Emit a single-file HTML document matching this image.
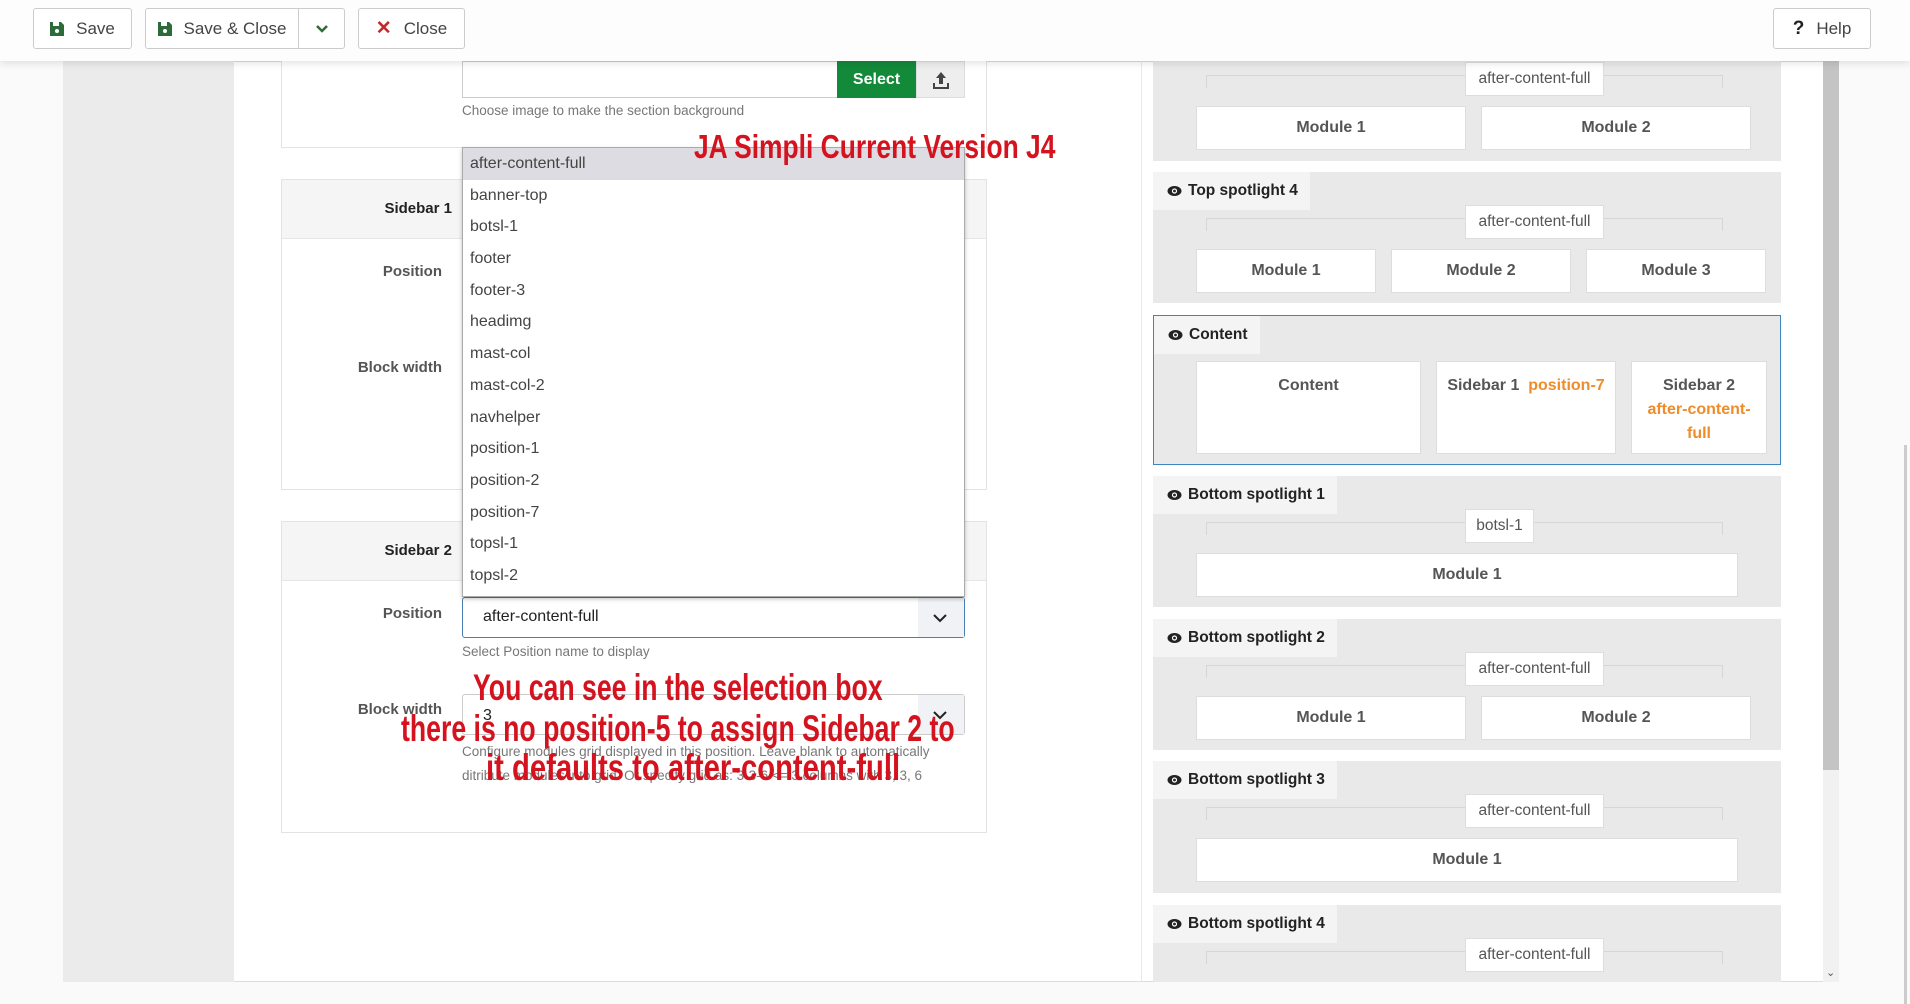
<!DOCTYPE html>
<html><head><meta charset="utf-8">
<style>
*{box-sizing:border-box;margin:0;padding:0}
body{width:1910px;height:1004px;overflow:hidden;background:#fafafa;font-family:"Liberation Sans",sans-serif;position:relative;color:#333}
.a{position:absolute}
.tb{left:0;top:0;width:1910px;height:61px;background:#fdfdfd;box-shadow:0 2px 8px rgba(0,0,0,.12);z-index:10}
.btn{position:absolute;top:8px;height:41px;border:1px solid #ccc;border-radius:3px;background:#fff;font-size:17px;color:#444;display:flex;align-items:center;justify-content:center;gap:12px}
.lbl{font-size:15px;font-weight:bold;color:#555;text-align:right;width:160px}
.card{border:1px solid #e3e3e3;background:#fff}
.hdr{background:#f5f5f5;border-bottom:1px solid #e6e6e6}
.inp{border:1px solid #ccc;border-radius:3px;background:#fff}
.help{font-size:13.5px;color:#777}
.red{color:#d4131f;font-family:"Liberation Sans",sans-serif;font-weight:bold;white-space:nowrap;z-index:6;transform-origin:0 50%}
.dd{left:462px;top:147px;width:503px;height:450px;background:#fff;border:1px solid #aaa;box-shadow:0 2px 4px rgba(0,0,0,.25);z-index:5}
.dd div{height:31.7px;line-height:31.7px;padding-left:7px;font-size:16px;color:#444}
.sec{position:absolute;left:1153px;width:628px;background:#e9e9e9}
.tab{position:absolute;left:0;top:0;height:38px;background:#f4f4f4;font-size:15.5px;font-weight:bold;color:#222;display:flex;align-items:center;padding-left:14px;gap:6px}
.tag{position:absolute;top:33px;height:34px;background:#fff;border:1px solid #ddd;font-size:15.5px;color:#555;line-height:32px;text-align:center}
.ln{position:absolute;top:46px;left:53px;width:517px;height:13px;border:1px solid #d6d6d6;border-bottom:none}
.mod{position:absolute;top:77px;height:44px;background:#fff;border:1px solid #ddd;font-size:16px;font-weight:bold;color:#555;text-align:center;line-height:42px}
</style></head><body>
<div class="a" style="left:63px;top:61px;width:1776px;height:921px;background:#fff;border:1px solid #ddd"></div>
<div class="a" style="left:63px;top:61px;width:171px;height:921px;background:#ebebeb"></div>
<div class="a" style="left:1141px;top:61px;width:1px;height:921px;background:#e8e8e8"></div>
<div class="a" style="left:1823px;top:61px;width:16px;height:921px;background:#f1f1f1"></div>
<div class="a" style="left:1823px;top:61px;width:16px;height:709px;background:#c4c4c4"></div>
<div class="a" style="left:1826px;top:966px;font-size:11px;color:#555">&#8964;</div>
<div class="a" style="left:1904px;top:445px;width:3px;height:559px;background:#ccc"></div>

<div class="a tb">
<div class="btn" style="left:33px;width:99px"><svg width="14" height="15" viewBox="0 0 14 15"><path d="M0 1h11l3 3v11H0z" fill="#2e6b3a"/><rect x="3" y="1" width="6" height="4" fill="#fff"/><circle cx="7" cy="10" r="2" fill="#fff"/></svg>Save</div>
<div class="btn" style="left:145px;width:154px;border-radius:3px 0 0 3px"><svg width="14" height="15" viewBox="0 0 14 15"><path d="M0 1h11l3 3v11H0z" fill="#2e6b3a"/><rect x="3" y="1" width="6" height="4" fill="#fff"/><circle cx="7" cy="10" r="2" fill="#fff"/></svg>Save &amp; Close</div>
<div class="btn" style="left:298px;width:47px;border-radius:0 3px 3px 0"><svg width="14" height="10" viewBox="0 0 14 10"><path d="M2 2l5 5 5-5" stroke="#2e6b3a" stroke-width="2.5" fill="none"/></svg></div>
<div class="btn" style="left:358px;width:107px"><span style="color:#c52827;font-weight:bold;font-size:19px">✕</span>Close</div>
<div class="btn" style="left:1773px;width:98px"><span style="font-weight:bold;font-size:19px;color:#222">?</span>Help</div>
</div>

<!-- top card -->
<div class="a card" style="left:281px;top:40px;width:706px;height:108px;border-top:none"></div>
<div class="a inp" style="left:462px;top:61px;width:380px;height:37px;border-radius:0"></div>
<div class="a" style="left:837px;top:61px;width:79px;height:37px;background:#138a3a;color:#fff;font-weight:bold;font-size:16px;text-align:center;line-height:37px">Select</div>
<div class="a" style="left:916px;top:61px;width:49px;height:37px;background:#eee;border:1px solid #ddd"><svg class="a" style="left:16px;top:9px" width="16" height="18" viewBox="0 0 16 18"><path d="M8 1L3 7h3v6h4V7h3z" fill="#444"/><path d="M1 12v5h14v-5" stroke="#444" stroke-width="2" fill="none"/></svg></div>
<div class="a help" style="left:462px;top:103px">Choose image to make the section background</div>

<!-- sidebar 1 -->
<div class="a card" style="left:281px;top:179px;width:706px;height:311px"></div>
<div class="a hdr" style="left:282px;top:180px;width:704px;height:59px"></div>
<div class="a lbl" style="left:292px;top:200px;color:#222">Sidebar 1</div>
<div class="a lbl" style="left:282px;top:263px">Position</div>
<div class="a lbl" style="left:282px;top:359px">Block width</div>

<!-- sidebar 2 -->
<div class="a card" style="left:281px;top:521px;width:706px;height:312px"></div>
<div class="a hdr" style="left:282px;top:522px;width:704px;height:59px"></div>
<div class="a lbl" style="left:292px;top:542px;color:#222">Sidebar 2</div>
<div class="a lbl" style="left:282px;top:605px">Position</div>
<div class="a inp" style="left:462px;top:597px;width:503px;height:41px;border-color:#4a7fb5;border-radius:3px"><span class="a" style="left:20px;top:10px;font-size:16px;color:#222">after-content-full</span><div class="a" style="right:0;top:0;width:46px;height:39px;background:#f0f2f6"></div><svg class="a" style="right:16px;top:14px" width="16" height="12" viewBox="0 0 16 12"><path d="M2 3l6 6 6-6" stroke="#222" stroke-width="2" fill="none"/></svg></div>
<div class="a help" style="left:462px;top:644px">Select Position name to display</div>
<div class="a lbl" style="left:282px;top:701px">Block width</div>
<div class="a inp" style="left:462px;top:694px;width:503px;height:41px"><span class="a" style="left:20px;top:12px;font-size:16px;color:#222">3</span><div class="a" style="right:0;top:0;width:46px;height:39px;background:#f0f2f6"></div><svg class="a" style="right:16px;top:14px" width="16" height="12" viewBox="0 0 16 12"><path d="M2 3l6 6 6-6" stroke="#222" stroke-width="2" fill="none"/></svg></div>
<div class="a help" style="left:462px;top:740px;width:510px;line-height:23.5px">Configure modules grid displayed in this position. Leave blank to automatically ditribute modules into grid. Or specify grid as: 3-3-6 &lt;= 3 columns with 3, 3, 6</div>

<!-- dropdown -->
<div class="a dd">
<div style="background:#dcdce2">after-content-full</div><div>banner-top</div><div>botsl-1</div><div>footer</div><div>footer-3</div><div>headimg</div><div>mast-col</div><div>mast-col-2</div><div>navhelper</div><div>position-1</div><div>position-2</div><div>position-7</div><div>topsl-1</div><div>topsl-2</div>
</div>

<div class="a red" style="left:694px;top:128px;font-size:33px;transform:scaleX(.8)">JA Simpli Current Version J4</div>
<div class="a red" style="left:473px;top:667px;font-size:37px;transform:scaleX(.72)">You can see in the selection box</div>
<div class="a red" style="left:401px;top:708px;font-size:37px;transform:scaleX(.72)">there is no position-5 to assign Sidebar 2 to</div>
<div class="a red" style="left:486px;top:747px;font-size:37px;transform:scaleX(.79)">it defaults to after-content-full</div>

<!-- right -->
<div class="sec" style="top:29px;height:132px"><div class="ln"></div><div class="tag" style="left:312px;width:139px">after-content-full</div><div class="mod" style="left:43px;width:270px">Module 1</div><div class="mod" style="left:328px;width:270px">Module 2</div></div>

<div class="sec" style="top:172px;height:131px"><div class="tab" style="width:157px"><svg width="15" height="12" viewBox="0 0 15 12"><ellipse cx="7.5" cy="6" rx="7" ry="5" fill="#222"/><circle cx="7.5" cy="6" r="2.6" fill="#fff"/><circle cx="7.5" cy="6" r="1.4" fill="#222"/></svg>Top spotlight 4</div><div class="ln"></div><div class="tag" style="left:312px;width:139px">after-content-full</div><div class="mod" style="left:43px;width:180px">Module 1</div><div class="mod" style="left:238px;width:180px">Module 2</div><div class="mod" style="left:433px;width:180px">Module 3</div></div>

<div class="sec" style="top:315px;height:150px;border:1.5px solid #3d86c0"><div class="tab" style="width:106px;left:0;top:0"><svg width="15" height="12" viewBox="0 0 15 12"><ellipse cx="7.5" cy="6" rx="7" ry="5" fill="#222"/><circle cx="7.5" cy="6" r="2.6" fill="#fff"/><circle cx="7.5" cy="6" r="1.4" fill="#222"/></svg>Content</div>
<div class="mod" style="left:42px;top:45px;width:225px;height:93px;line-height:1.5;padding-top:12px">Content</div>
<div class="mod" style="left:282px;top:45px;width:180px;height:93px;line-height:1.5;padding-top:12px">Sidebar 1&nbsp; <span style="color:#ef8c2a">position-7</span></div>
<div class="mod" style="left:477px;top:45px;width:136px;height:93px;line-height:24px;padding-top:12px">Sidebar 2<br><span style="color:#ef8c2a">after-content-<br>full</span></div></div>

<div class="sec" style="top:476px;height:131px"><div class="tab" style="width:184px"><svg width="15" height="12" viewBox="0 0 15 12"><ellipse cx="7.5" cy="6" rx="7" ry="5" fill="#222"/><circle cx="7.5" cy="6" r="2.6" fill="#fff"/><circle cx="7.5" cy="6" r="1.4" fill="#222"/></svg>Bottom spotlight 1</div><div class="ln"></div><div class="tag" style="left:312px;width:69px">botsl-1</div><div class="mod" style="left:43px;width:542px">Module 1</div></div>

<div class="sec" style="top:619px;height:131px"><div class="tab" style="width:184px"><svg width="15" height="12" viewBox="0 0 15 12"><ellipse cx="7.5" cy="6" rx="7" ry="5" fill="#222"/><circle cx="7.5" cy="6" r="2.6" fill="#fff"/><circle cx="7.5" cy="6" r="1.4" fill="#222"/></svg>Bottom spotlight 2</div><div class="ln"></div><div class="tag" style="left:312px;width:139px">after-content-full</div><div class="mod" style="left:43px;width:270px">Module 1</div><div class="mod" style="left:328px;width:270px">Module 2</div></div>

<div class="sec" style="top:761px;height:132px"><div class="tab" style="width:184px"><svg width="15" height="12" viewBox="0 0 15 12"><ellipse cx="7.5" cy="6" rx="7" ry="5" fill="#222"/><circle cx="7.5" cy="6" r="2.6" fill="#fff"/><circle cx="7.5" cy="6" r="1.4" fill="#222"/></svg>Bottom spotlight 3</div><div class="ln"></div><div class="tag" style="left:312px;width:139px">after-content-full</div><div class="mod" style="left:43px;width:542px">Module 1</div></div>

<div class="sec" style="top:905px;height:77px;overflow:hidden"><div class="tab" style="width:184px"><svg width="15" height="12" viewBox="0 0 15 12"><ellipse cx="7.5" cy="6" rx="7" ry="5" fill="#222"/><circle cx="7.5" cy="6" r="2.6" fill="#fff"/><circle cx="7.5" cy="6" r="1.4" fill="#222"/></svg>Bottom spotlight 4</div><div class="ln"></div><div class="tag" style="left:312px;width:139px">after-content-full</div></div>
</body></html>
